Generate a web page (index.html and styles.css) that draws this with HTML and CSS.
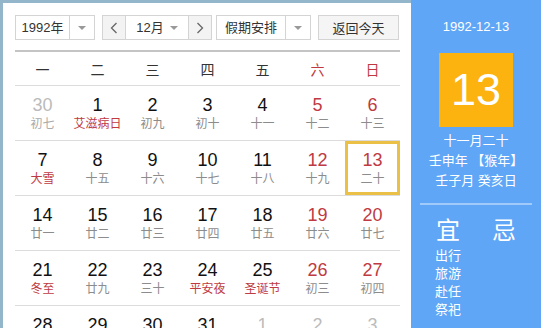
FILE: index.html
```html
<!DOCTYPE html>
<html lang="zh-CN">
<head>
  <meta charset="UTF-8">
  <title>万年历</title>
  <link rel="stylesheet" href="styles.css">
</head>
<body>
<div class="calendar">
  <div class="cal-main">
    <div class="toolbar">
      <div class="select select-year">
        <span class="select-text">1992年</span>
        <span class="select-arrow"><i class="tri"></i></span>
      </div>
      <div class="month-group">
        <span class="nav-btn">
          <svg width="8" height="12" viewBox="0 0 8 12"><polyline points="6.5,1 1.5,6 6.5,11" fill="none" stroke="#666" stroke-width="1.3"/></svg>
        </span>
        <div class="month-sel">
          <span class="select-text">12月</span>
          <i class="tri"></i>
        </div>
        <span class="nav-btn">
          <svg width="8" height="12" viewBox="0 0 8 12"><polyline points="1.5,1 6.5,6 1.5,11" fill="none" stroke="#666" stroke-width="1.3"/></svg>
        </span>
      </div>
      <div class="select select-holiday">
        <span class="select-text">假期安排</span>
        <span class="select-arrow"><i class="tri"></i></span>
      </div>
      <div class="today-btn">返回今天</div>
    </div>

    <div class="week-head">
      <span>一</span><span>二</span><span>三</span><span>四</span><span>五</span>
      <span class="weekend">六</span><span class="weekend">日</span>
    </div>

    <div class="days">
      <div class="day other"><b>30</b><small>初七</small></div>
      <div class="day"><b>1</b><small class="fest">艾滋病日</small></div>
      <div class="day"><b>2</b><small>初九</small></div>
      <div class="day"><b>3</b><small>初十</small></div>
      <div class="day"><b>4</b><small>十一</small></div>
      <div class="day weekend"><b>5</b><small>十二</small></div>
      <div class="day weekend"><b>6</b><small>十三</small></div>

      <div class="day"><b>7</b><small class="fest">大雪</small></div>
      <div class="day"><b>8</b><small>十五</small></div>
      <div class="day"><b>9</b><small>十六</small></div>
      <div class="day"><b>10</b><small>十七</small></div>
      <div class="day"><b>11</b><small>十八</small></div>
      <div class="day weekend"><b>12</b><small>十九</small></div>
      <div class="day weekend today"><b>13</b><small>二十</small></div>

      <div class="day"><b>14</b><small>廿一</small></div>
      <div class="day"><b>15</b><small>廿二</small></div>
      <div class="day"><b>16</b><small>廿三</small></div>
      <div class="day"><b>17</b><small>廿四</small></div>
      <div class="day"><b>18</b><small>廿五</small></div>
      <div class="day weekend"><b>19</b><small>廿六</small></div>
      <div class="day weekend"><b>20</b><small>廿七</small></div>

      <div class="day"><b>21</b><small class="fest">冬至</small></div>
      <div class="day"><b>22</b><small>廿九</small></div>
      <div class="day"><b>23</b><small>三十</small></div>
      <div class="day"><b>24</b><small class="fest">平安夜</small></div>
      <div class="day"><b>25</b><small class="fest">圣诞节</small></div>
      <div class="day weekend"><b>26</b><small>初三</small></div>
      <div class="day weekend"><b>27</b><small>初四</small></div>

      <div class="day"><b>28</b><small>初五</small></div>
      <div class="day"><b>29</b><small>初六</small></div>
      <div class="day"><b>30</b><small>初七</small></div>
      <div class="day"><b>31</b><small>初八</small></div>
      <div class="day other"><b>1</b><small>元旦</small></div>
      <div class="day other"><b>2</b><small>初十</small></div>
      <div class="day other"><b>3</b><small>十一</small></div>
    </div>
  </div>

  <div class="cal-side">
    <div class="side-date">1992-12-13</div>
    <div class="side-day">13</div>
    <div class="side-lunar">
      <div>十一月二十</div>
      <div>壬申年 【猴年】</div>
      <div>壬子月 癸亥日</div>
    </div>
    <div class="side-line"></div>
    <div class="yiji">
      <div class="yiji-col">
        <div class="yiji-title">宜</div>
        <div class="yiji-item">出行</div>
        <div class="yiji-item">旅游</div>
        <div class="yiji-item">赴任</div>
        <div class="yiji-item">祭祀</div>
      </div>
      <div class="yiji-col">
        <div class="yiji-title">忌</div>
      </div>
    </div>
  </div>
</div>
</body>
</html>
```

FILE: styles.css
```css
body {
  margin: 0;
  padding: 0;
  font-family: "Liberation Sans", Arial, "Noto Sans CJK SC", sans-serif;
  background-color: #fff;
  color: #333;
  overflow: hidden;
}

.calendar {
  display: flex;
  width: 541px;
  height: 328px;
  overflow: hidden;
}

.cal-main {
  width: 385px;
  padding: 12px 11px 0 12px;
  border-left: 3px solid #93b6cb;
  border-top: 3px solid #93b6cb;
  background-color: #fff;
}

/* barra de cima */
.toolbar {
  display: flex;
  height: 25px;
  font-size: 13px;
}

.select, .month-group, .today-btn {
  box-sizing: border-box;
  height: 25px;
  border: 1px solid #d4d4d4;
  display: flex;
  align-items: center;
}

.select-text {
  flex: 1;
  text-align: center;
  line-height: 23px;
}

.select-arrow {
  width: 24px;
  height: 23px;
  border-left: 1px solid #d4d4d4;
  display: flex;
  align-items: center;
  justify-content: center;
}

.tri {
  display: block;
  width: 0;
  height: 0;
  border-left: 4px solid transparent;
  border-right: 4px solid transparent;
  border-top: 4px solid #999;
}

.select-year {
  width: 80px;
}

.month-group {
  width: 110px;
  margin-left: 7px;
}

.nav-btn {
  width: 22px;
  height: 23px;
  background-color: #f3f3f3;
  display: flex;
  align-items: center;
  justify-content: center;
}

.month-sel {
  flex: 1;
  height: 23px;
  border-left: 1px solid #d4d4d4;
  border-right: 1px solid #d4d4d4;
  display: flex;
  align-items: center;
  padding-right: 10px;
}

.month-sel .select-text {
  padding-left: 4px;
}

.select-holiday {
  width: 95px;
  margin-left: 4px;
}

.today-btn {
  width: 81px;
  margin-left: 7px;
  justify-content: center;
  background-color: #f5f5f5;
}

/* cabeçalho dos dias */
.week-head {
  margin-top: 10px;
  border-top: 2px solid #c4c4c4;
  border-bottom: 1px solid #dcdcdc;
  display: grid;
  grid-template-columns: repeat(7, 55px);
  height: 33px;
  align-items: center;
  text-align: center;
  font-size: 14px;
  color: #333;
}

.week-head .weekend {
  color: #c0393f;
}

.days {
  display: grid;
  grid-template-columns: repeat(7, 55px);
}

.day {
  height: 54px;
  border-bottom: 1px solid #dcdcdc;
  text-align: center;
  box-sizing: content-box;
}

.day b {
  display: block;
  font-weight: normal;
  font-size: 18px;
  line-height: 20px;
  padding-top: 9px;
  color: #111;
}

.day small {
  display: block;
  font-size: 12px;
  line-height: 16px;
  margin-top: 1px;
  color: #8c8c8c;
}

.day.weekend b {
  color: #bf3a42;
}

.day small.fest {
  color: #bf3a42;
}

.day.other b {
  color: #bbb;
}

.day.other small {
  color: #aaa;
}

.day.today {
  box-shadow: inset 0 0 0 3px #eac046;
}

/* painel lateral azul */
.cal-side {
  width: 130px;
  background-color: #60a6f6;
  color: #fff;
  text-align: center;
}

.side-date {
  padding-top: 19px;
  font-size: 13px;
  line-height: 16px;
}

.side-day {
  width: 74px;
  height: 74px;
  margin: 18px auto 0;
  background-color: #fcb20f;
  font-size: 45px;
  line-height: 74px;
}

.side-lunar {
  margin-top: 4px;
  font-size: 13px;
  line-height: 20px;
}

.side-line {
  height: 2px;
  margin: 12px 9px 0;
  background-color: #9fcaf9;
}

.yiji {
  display: flex;
  margin: 12px 9px 0;
}

.yiji-col {
  flex: 1;
}

.yiji-title {
  font-size: 24px;
  line-height: 28px;
  margin-bottom: 2px;
}

.yiji-item {
  font-size: 13px;
  line-height: 18px;
}
```
